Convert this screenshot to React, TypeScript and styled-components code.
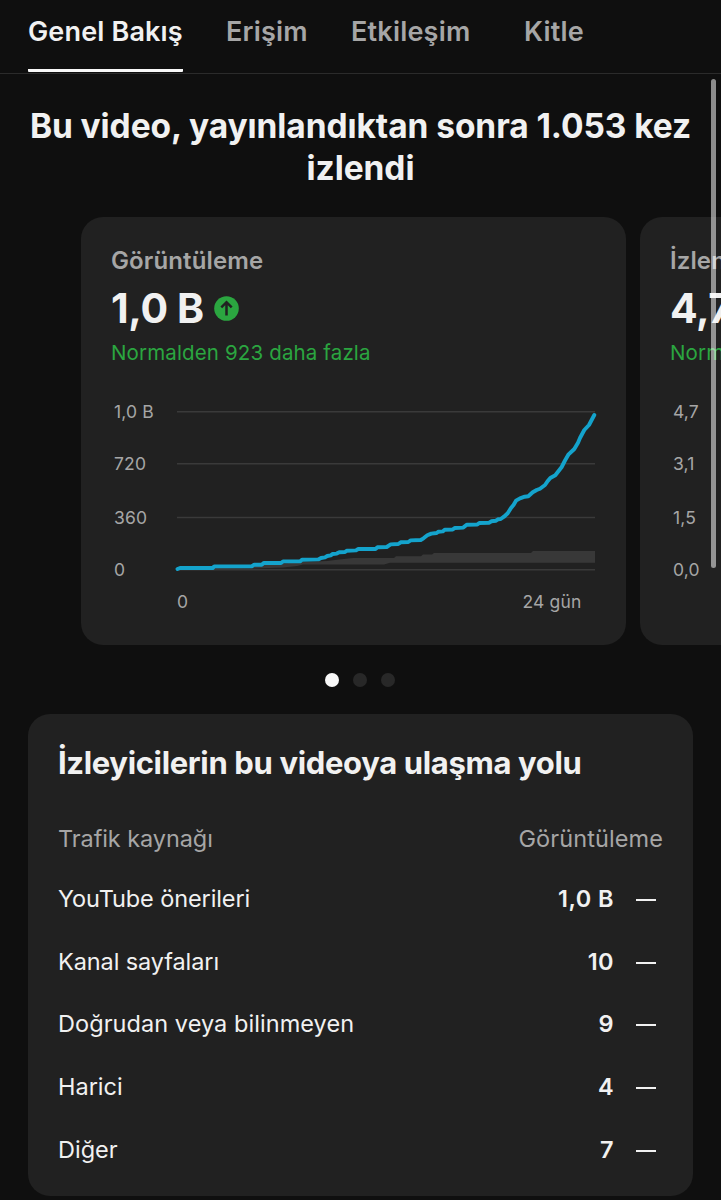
import React from "react";
import styled, { createGlobalStyle } from "styled-components";

const GlobalStyle = createGlobalStyle`
  * { box-sizing: border-box; }
  body {
    margin: 0;
    background: #0f0f0f;
    font-family: Inter, "Liberation Sans", sans-serif;
    color: #f1f1f1;
  }
`;

const Screen = styled.main`
  position: relative;
  width: 721px;
  height: 1200px;
  overflow: hidden;
  background: #0f0f0f;
`;

const TabBar = styled.nav`
  display: grid;
  grid-template-columns: 198px 125px 173px auto;
  justify-items: start;
  height: 73.5px;
  padding-left: 28px;
  border-bottom: 1.5px solid #2b2b2b;
`;

const Tab = styled.a<{ $active?: boolean }>`
  height: 72px;
  border-bottom: ${(p) => (p.$active ? "3px solid #f8f8f8" : "none")};
  border-radius: 1px;
  font-size: 27px;
  font-weight: 600;
  line-height: 64px;
  letter-spacing: ${(p) => (p.$active ? "0.15px" : "0.2px")};
  white-space: nowrap;
  color: ${(p) => (p.$active ? "#f1f1f1" : "#a6a6a6")};
`;

const Headline = styled.h1`
  margin: 31.5px 28px 0;
  font-size: 33.5px;
  font-weight: 700;
  line-height: 42px;
  letter-spacing: -0.08px;
  text-align: center;
`;

const Carousel = styled.section`
  display: flex;
  gap: 14px;
  margin-top: 28px;
  padding-left: 81px;
  overflow: hidden;
`;

const MetricCard = styled.article`
  flex: 0 0 545px;
  height: 427.5px;
  padding: 28.5px 30px 0;
  border-radius: 22px;
  background: #212121;
`;

const MetricLabel = styled.h2`
  margin: 0;
  font-size: 24px;
  font-weight: 600;
  line-height: 30px;
  letter-spacing: 0.12px;
  white-space: nowrap;
  color: #a6a6a6;
`;

const MetricValue = styled.div`
  display: flex;
  align-items: center;
  gap: 10px;
  margin-top: 10.5px;
  font-size: 41px;
  font-weight: 700;
  line-height: 44px;
  letter-spacing: -0.38px;
`;

const MetricNote = styled.p`
  margin: 9px 0 0;
  font-size: 20.5px;
  line-height: 28px;
  letter-spacing: 0.14px;
  white-space: nowrap;
  color: #2ba640;
`;

const Chart = styled.div`
  display: grid;
  grid-template-columns: 66px 418px;
  margin-top: 33px;
`;

const AxisText = styled.span`
  font-size: 17.5px;
  line-height: 24px;
  letter-spacing: 0.15px;
  white-space: nowrap;
  color: #a6a6a6;
`;

const YAxis = styled.div`
  display: grid;
  grid-template-rows: 52px 54px 52px 24px;
  padding-left: 3px;
`;

const XAxis = styled.div`
  grid-column: 2;
  display: flex;
  justify-content: space-between;
  padding: 8px 13.5px 0 0;
`;

const Dots = styled.div`
  display: flex;
  justify-content: center;
  gap: 14px;
  margin: 28px 1px 0 0;
`;

const Dot = styled.i<{ $active?: boolean }>`
  width: 14px;
  height: 14px;
  border-radius: 50%;
  background: ${(p) => (p.$active ? "#f8f8f8" : "#282828")};
`;

const SourcesCard = styled.section`
  height: 482px;
  margin: 27.5px 28px 0;
  padding: 29px 30px 0;
  border-radius: 22px;
  background: #212121;
`;

const SourcesTitle = styled.h2`
  margin: 0;
  font-size: 31px;
  font-weight: 700;
  line-height: 40px;
  letter-spacing: -0.35px;
  white-space: nowrap;
`;

const TableHead = styled.div`
  display: flex;
  justify-content: space-between;
  margin: 41px 0 14px;
  font-size: 23.5px;
  line-height: 30px;
  color: #a6a6a6;
`;

const HeadCell = styled.span<{ $tracking: number }>`
  letter-spacing: ${(p) => p.$tracking}px;
`;

const SourceRow = styled.div`
  display: flex;
  align-items: center;
  height: 62.6px;
  padding-right: 7px;
  font-size: 23.5px;
  line-height: 30px;
`;

const SourceName = styled.span<{ $tracking: number }>`
  flex: 1;
  letter-spacing: ${(p) => p.$tracking}px;
`;

const SourceValue = styled.span`
  font-weight: 600;
  letter-spacing: 0.45px;
`;

const TrendDash = styled.i`
  width: 20px;
  height: 2px;
  margin: 2px 0 0 22px;
  background: #f1f1f1;
`;

const ScrollThumb = styled.div`
  position: absolute;
  top: 79px;
  right: 5px;
  width: 5.5px;
  height: 489px;
  border-radius: 3px;
  background: rgba(255, 255, 255, 0.52);
`;

const GRID_LINES = [411.8, 463.8, 517.6, 569.8];

const BAND =
  "177,568 214,566.5 254,565 282,563.5 302,562 327,561 337,559.7 353,558 394,558 396,556.3 421,556.3 423,554.6 432,554.6 434,553 531,553 533,551 595,551 595,562.8 390,562.8 384,564.6 303,564.6 297,566 283,567.5 254,568.5 177,569.5";

const VIEWS =
  "177.5,569 180,568 212.7,568 214.3,566.4 251.7,566.4 254,564.7 261.7,564.7 263.7,563 281,563 283,561.4 300,561.4 302,559.7 318.3,559.4 321,558 325,557.4 327.3,556 330.7,555.3 332.7,554 336.7,553.6 339.3,552.3 345,552 346.7,550.7 356,550.4 358.3,549 375.5,549 377.5,547.3 386.7,547 390.7,544.4 398.3,544 400.7,542.3 408.3,542 410.7,540.4 420.7,540 423.5,538.3 427.3,535.3 431.3,533.6 436.7,533 438.5,531.7 442.7,531.4 444.7,529.7 452.7,529.6 454.7,528 463.3,527.6 466.7,524.7 477.3,524.6 479.3,523 489.3,522.7 491.3,521.3 496,520.7 498,519.3 500.7,519 504,516.7 507.7,513.3 511,508 513.5,505 516,500.7 520,498.3 524.7,496.7 528.3,496.3 532.7,492.3 536.7,490 540,488.7 545,485 548,480.7 550.3,478 555.3,475.3 561.7,467 565,460.5 568.3,454.7 574.3,449 578,442.7 580,438 584.3,430 589,425 594.3,415";

const ViewsPlot = () => (
  <svg width="418" height="182" viewBox="177 400 418 182" overflow="visible">
    {GRID_LINES.map((y) => (
      <line key={y} x1="177" x2="595" y1={y} y2={y} stroke="#3a3a3a" strokeWidth="1.5" />
    ))}
    <polygon points={BAND} fill="#383838" />
    <polyline
      points={VIEWS}
      fill="none"
      stroke="#14a3cc"
      strokeWidth="3.9"
      strokeLinejoin="round"
      strokeLinecap="round"
    />
  </svg>
);

const UpBadge = () => (
  <svg width="25" height="25" viewBox="0 0 25 25">
    <circle cx="12.5" cy="12.5" r="12.3" fill="#2ba640" />
    <path
      d="M12.5 19.6V6.6M7.3 11.4L12.5 6.2L17.7 11.4"
      fill="none"
      stroke="#212121"
      strokeWidth="2.5"
    />
  </svg>
);

const SOURCES = [
  { name: "YouTube önerileri", value: "1,0 B", tracking: -0.1 },
  { name: "Kanal sayfaları", value: "10", tracking: -0.1 },
  { name: "Doğrudan veya bilinmeyen", value: "9", tracking: 0.06 },
  { name: "Harici", value: "4", tracking: 0 },
  { name: "Diğer", value: "7", tracking: 0 },
];

export default function App() {
  return (
    <>
      <GlobalStyle />
      <Screen>
        <TabBar>
          <Tab $active>Genel Bakış</Tab>
          <Tab>Erişim</Tab>
          <Tab>Etkileşim</Tab>
          <Tab>Kitle</Tab>
        </TabBar>
        <Headline>Bu video, yayınlandıktan sonra 1.053 kez izlendi</Headline>
        <Carousel>
          <MetricCard>
            <MetricLabel>Görüntüleme</MetricLabel>
            <MetricValue>
              1,0 B
              <UpBadge />
            </MetricValue>
            <MetricNote>Normalden 923 daha fazla</MetricNote>
            <Chart>
              <YAxis>
                {["1,0 B", "720", "360", "0"].map((t) => (
                  <AxisText key={t}>{t}</AxisText>
                ))}
              </YAxis>
              <ViewsPlot />
              <XAxis>
                <AxisText>0</AxisText>
                <AxisText>24 gün</AxisText>
              </XAxis>
            </Chart>
          </MetricCard>
          <MetricCard>
            <MetricLabel>İzlenme</MetricLabel>
            <MetricValue>4,7</MetricValue>
            <MetricNote>Normalden</MetricNote>
            <Chart>
              <YAxis>
                {["4,7", "3,1", "1,5", "0,0"].map((t) => (
                  <AxisText key={t}>{t}</AxisText>
                ))}
              </YAxis>
            </Chart>
          </MetricCard>
        </Carousel>
        <Dots>
          <Dot $active />
          <Dot />
          <Dot />
        </Dots>
        <SourcesCard>
          <SourcesTitle>İzleyicilerin bu videoya ulaşma yolu</SourcesTitle>
          <TableHead>
            <HeadCell $tracking={-0.08}>Trafik kaynağı</HeadCell>
            <HeadCell $tracking={0.1}>Görüntüleme</HeadCell>
          </TableHead>
          {SOURCES.map((s) => (
            <SourceRow key={s.name}>
              <SourceName $tracking={s.tracking}>{s.name}</SourceName>
              <SourceValue>{s.value}</SourceValue>
              <TrendDash />
            </SourceRow>
          ))}
        </SourcesCard>
        <ScrollThumb />
      </Screen>
    </>
  );
}
